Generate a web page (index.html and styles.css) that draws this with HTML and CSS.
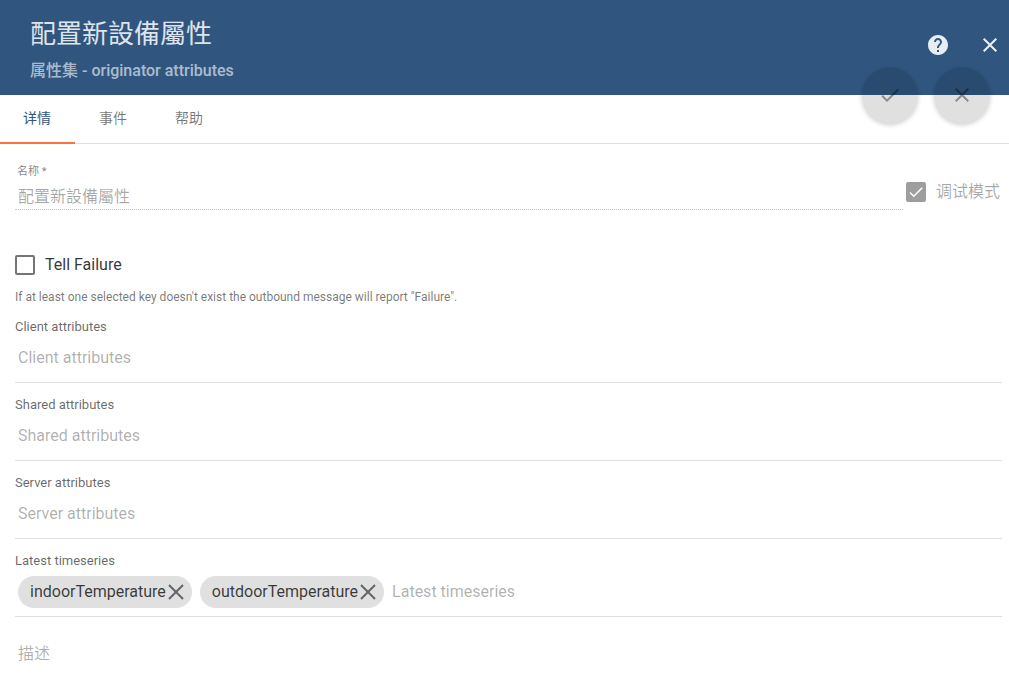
FILE: index.html
```html
<!DOCTYPE html>
<html lang="zh">
<head>
<meta charset="utf-8">
<title>配置新設備屬性</title>
<link rel="stylesheet" href="styles.css">
</head>
<body>
<div class="dialog">
  <header class="header">
    <div class="heading">
      <h1 class="title">配置新設備屬性</h1>
      <div class="subtitle">属性集 - originator attributes</div>
    </div>
    <div class="header-actions">
      <svg class="help" viewBox="0 0 24 24"><path fill="#e8edf3" d="M12 2C6.48 2 2 6.48 2 12s4.48 10 10 10 10-4.48 10-10S17.52 2 12 2zm1 17h-2v-2h2v2zm2.07-7.75l-.9.92C13.45 12.9 13 13.5 13 15h-2v-.5c0-1.1.45-2.1 1.17-2.83l1.24-1.26c.37-.36.59-.86.59-1.41 0-1.1-.9-2-2-2s-2 .9-2 2H8c0-2.21 1.79-4 4-4s4 1.79 4 4c0 .88-.36 1.68-.93 2.25z"/></svg>
      <svg class="close" viewBox="0 0 24 24"><path fill="#eef1f5" d="M19 6.41L17.59 5 12 10.59 6.41 5 5 6.41 10.59 12 5 17.59 6.41 19 12 13.41 17.59 19 19 17.59 13.41 12z"/></svg>
    </div>
  </header>
  <div class="fabs">
    <div class="fab"><svg viewBox="0 0 24 24"><path fill="rgba(0,0,0,.38)" d="M9 16.17L4.83 12l-1.42 1.41L9 19 21 7l-1.41-1.41z"/></svg></div>
    <div class="fab"><svg viewBox="0 0 24 24"><path fill="rgba(0,0,0,.38)" d="M19 6.41L17.59 5 12 10.59 6.41 5 5 6.41 10.59 12 5 17.59 6.41 19 12 13.41 17.59 19 19 17.59 13.41 12z"/></svg></div>
  </div>
  <nav class="tabs">
    <div class="tab active">详情</div>
    <div class="tab">事件</div>
    <div class="tab">帮助</div>
  </nav>
  <main class="content">
    <div class="name-row">
      <div class="name-field">
        <div class="name-label">名称 *</div>
        <div class="name-value">配置新設備屬性</div>
      </div>
      <div class="debug">
        <span class="debug-box"><svg viewBox="0 0 24 24"><path fill="#fff" d="M9 16.17L4.83 12l-1.42 1.41L9 19 21 7l-1.41-1.41z"/></svg></span>
        <span class="debug-text">调试模式</span>
      </div>
    </div>
    <div class="tell">
      <span class="checkbox"></span>
      <span class="tell-text">Tell Failure</span>
    </div>
    <div class="hint">If at least one selected key doesn't exist the outbound message will report "Failure".</div>
    <section class="chips-field">
      <div class="field-label">Client attributes</div>
      <div class="chips-row"><span class="placeholder">Client attributes</span></div>
    </section>
    <section class="chips-field">
      <div class="field-label">Shared attributes</div>
      <div class="chips-row"><span class="placeholder">Shared attributes</span></div>
    </section>
    <section class="chips-field">
      <div class="field-label">Server attributes</div>
      <div class="chips-row"><span class="placeholder">Server attributes</span></div>
    </section>
    <section class="chips-field">
      <div class="field-label">Latest timeseries</div>
      <div class="chips-row">
        <span class="chip">indoorTemperature<svg viewBox="0 0 18 18"><path d="M2 2L16 16M16 2L2 16"/></svg></span>
        <span class="chip">outdoorTemperature<svg viewBox="0 0 18 18"><path d="M2 2L16 16M16 2L2 16"/></svg></span>
        <span class="placeholder">Latest timeseries</span>
      </div>
    </section>
    <div class="description">描述</div>
  </main>
</div>
</body>
</html>
```
FILE: styles.css
```css
* { box-sizing: border-box; }
html, body { margin: 0; padding: 0; height: 100%; overflow: hidden; background: #fff; }
body { font-family: Roboto, "Noto Sans CJK SC", "Noto Sans CJK TC", sans-serif; color: rgba(0,0,0,.87); }
.dialog { position: relative; width: 1009px; height: 680px; overflow: hidden; }

.header { height: 95px; background: #305680; color: #fff; display: flex; justify-content: space-between; padding: 16px 0 0 30px; }
.title { margin: 0; font-size: 26px; font-weight: 400; line-height: 36px; color: rgba(255,255,255,.85); }
.subtitle { margin-top: 9px; font-size: 16px; font-weight: 500; line-height: 20px; color: rgba(255,255,255,.62); }
.header-actions { display: flex; align-items: center; gap: 28px; padding: 0 7px 0 0; height: 58px; }
.help { width: 24px; height: 24px; }
.close { width: 24px; height: 24px; }

.fabs { position: absolute; top: 67px; left: 862px; display: flex; gap: 16px; }
.fab { width: 56px; height: 56px; border-radius: 50%; background: rgba(0,0,0,.12); box-shadow: 0 2px 5px rgba(0,0,0,.2); display: flex; align-items: center; justify-content: center; }
.fab svg { width: 24px; height: 24px; }

.tabs { display: flex; height: 49px; border-bottom: 1px solid #e0e0e0; }
.tab { width: 76px; height: 48px; padding-top: 14px; font-size: 14px; font-weight: 400; line-height: 18px; text-align: center; color: rgba(0,0,0,.54); }
.tab.active { width: 75px; padding-right: 1px; color: #305680; border-bottom: 2px solid #ff7043; height: 49px; }

.content { padding: 20px 7px 0 15px; }
.name-row { display: flex; align-items: flex-start; height: 47px; }
.name-field { flex: 1; padding-left: 2px; height: 46px; border-bottom: 1px dotted #c4c4c4; margin-right: 3px; }
.name-label { font-size: 11px; line-height: 15px; color: rgba(0,0,0,.5); }
.name-value { margin-top: 7px; font-size: 16px; line-height: 22px; padding-left: 1px; color: rgba(0,0,0,.34); }
.debug { display: flex; align-items: center; gap: 10px; margin-top: 18px; margin-right: 2px; }
.debug-box { width: 20px; height: 20px; border-radius: 2px; background: #9e9e9e; display: flex; align-items: center; justify-content: center; }
.debug-box svg { width: 18px; height: 18px; }
.debug-text { font-size: 16px; line-height: 20px; color: rgba(0,0,0,.34); }

.tell { display: flex; align-items: center; gap: 10px; margin-top: 44px; height: 20px; }
.checkbox { width: 20px; height: 20px; border: 2px solid rgba(0,0,0,.54); border-radius: 2px; }
.tell-text { font-size: 16px; line-height: 20px; color: rgba(0,0,0,.8); }
.hint { margin-top: 15px; margin-bottom: 1px; font-size: 12px; line-height: 14px; color: rgba(0,0,0,.54); }

.chips-field { height: 78px; border-bottom: 1px solid #e0e0e0; }
.field-label { padding-top: 15px; font-size: 13px; line-height: 14px; color: rgba(0,0,0,.6); }
.chips-row { display: flex; align-items: center; gap: 8px; height: 32px; margin-top: 8px; padding-left: 3px; }
.placeholder { font-size: 16px; line-height: 20px; color: rgba(0,0,0,.32); }
.chip { display: flex; align-items: center; height: 32px; padding: 0 7px 0 12px; border-radius: 16px; background: #e0e0e0; font-size: 16px; line-height: 20px; color: rgba(0,0,0,.75); }
.chip svg { width: 18px; height: 18px; margin-left: 1px; }
.chip svg path { fill: none; stroke: #666; stroke-width: 2; }
.description { margin-top: 27px; padding-left: 3px; font-size: 16px; line-height: 20px; color: rgba(0,0,0,.32); }
```
